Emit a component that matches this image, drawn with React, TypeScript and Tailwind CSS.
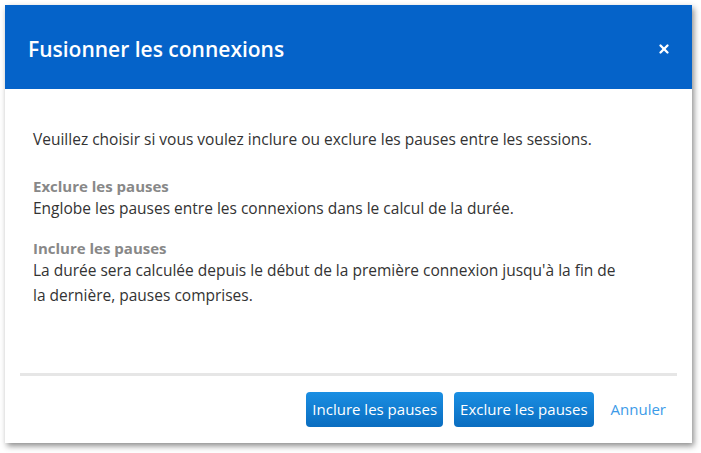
import { X } from 'lucide-react';

export default function App() {
  return (
    <div className="h-[453px] w-[701px] bg-white p-[5px]" style={{ fontFamily: '"Open Sans", "Noto Sans", sans-serif' }}>
      <div className="flex h-[438px] w-[687px] flex-col bg-white shadow-[2px_3px_6px_rgba(0,0,0,0.45)]">
        {/* Header */}
        <div className="flex h-[84px] shrink-0 items-center justify-between bg-[#0563c9] pl-[23px] pr-[21px] pt-[6px]">
          <h1 className="text-[21px] font-semibold text-white">Fusionner les connexions</h1>
          <X className="-mt-[2px] h-[14px] w-[14px] text-white" strokeWidth={4} />
        </div>

        {/* Body */}
        <div className="flex-1 px-[28px] pt-[38px] text-[15.5px] leading-[24px] text-[#333]">
          <p>Veuillez choisir si vous voulez inclure ou exclure les pauses entre les sessions.</p>
          <div className="mt-[25px]">
            <p className="text-[15px] font-bold leading-[20px] text-[#888]">Exclure les pauses</p>
            <p>Englobe les pauses entre les connexions dans le calcul de la durée.</p>
          </div>
          <div className="mt-[18px]">
            <p className="text-[15px] font-bold leading-[20px] text-[#888]">Inclure les pauses</p>
            <p className="leading-[25px]">
              La durée sera calculée depuis le début de la première connexion jusqu'à la fin de
              <br />
              la dernière, pauses comprises.
            </p>
          </div>
        </div>

        {/* Footer */}
        <div className="mx-[15px] h-[3px] bg-[#e6e6e6]" />
        <div className="flex items-center justify-end gap-[11px] pb-[16px] pr-[26px] pt-[16px]">
          <button className="h-[35px] rounded-[4px] bg-gradient-to-b from-[#1a8fe3] to-[#0a6dc0] px-[6px] text-[15px] text-white">
            Inclure les pauses
          </button>
          <button className="h-[35px] rounded-[4px] bg-gradient-to-b from-[#1a8fe3] to-[#0a6dc0] px-[6px] text-[15px] text-white">
            Exclure les pauses
          </button>
          <button className="ml-[6px] text-[15px] text-[#3c9be8]">Annuler</button>
        </div>
      </div>
    </div>
  );
}
